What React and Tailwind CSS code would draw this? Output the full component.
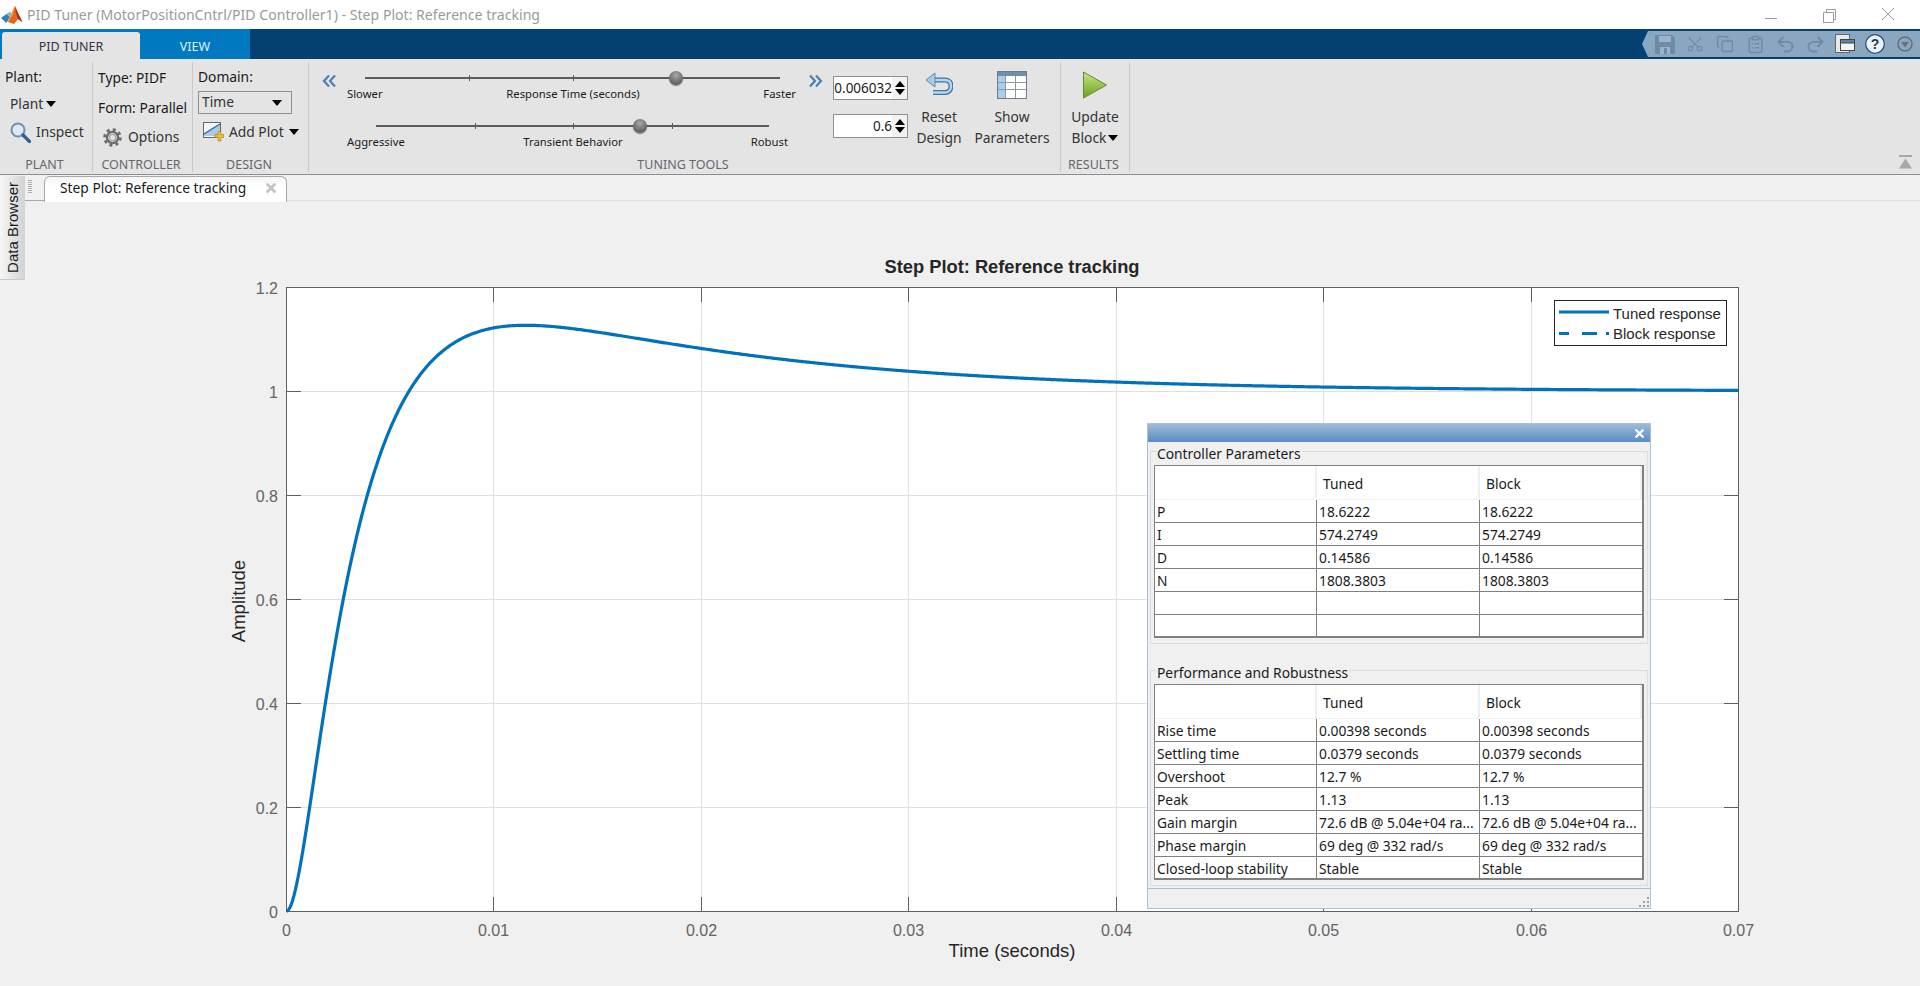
import React from "react";
import { Scissors, Copy, ClipboardList, Undo2, Redo2, X } from "lucide-react";

// fitted step response, y(t) from the reference plot
function stepResponse(t) {
  return 1 + 0.395 * Math.exp(-t / 0.0129) - 1.395 * (1 + 186 * t) * Math.exp(-420 * t) - 296 * t * Math.exp(-1000 * t);
}

function curvePath() {
  const pts = [];
  for (let x = 286.5; x <= 1739; x += 1.5) {
    const t = (x - 286.5) / 20740;
    pts.push(`${x.toFixed(1)} ${(911.3 - 520 * stepResponse(t)).toFixed(2)}`);
  }
  return "M" + pts.join("L");
}

const xTicks = [
  ["0", 286.5], ["0.01", 493.5], ["0.02", 701.5], ["0.03", 908.5], ["0.04", 1116.5], ["0.05", 1323.5], ["0.06", 1531.5], ["0.07", 1738.5],
];
const yTicks = [
  ["0", 911.5], ["0.2", 807.5], ["0.4", 703.5], ["0.6", 599.5], ["0.8", 495.5], ["1", 391.5], ["1.2", 287.5],
];

const controllerRows = [
  ["P", "18.6222", "18.6222"],
  ["I", "574.2749", "574.2749"],
  ["D", "0.14586", "0.14586"],
  ["N", "1808.3803", "1808.3803"],
  ["", "", ""],
  ["", "", ""],
];
const perfRows = [
  ["Rise time", "0.00398 seconds", "0.00398 seconds"],
  ["Settling time", "0.0379 seconds", "0.0379 seconds"],
  ["Overshoot", "12.7 %", "12.7 %"],
  ["Peak", "1.13", "1.13"],
  ["Gain margin", "72.6 dB @ 5.04e+04 ra...", "72.6 dB @ 5.04e+04 ra..."],
  ["Phase margin", "69 deg @ 332 rad/s", "69 deg @ 332 rad/s"],
  ["Closed-loop stability", "Stable", "Stable"],
];

function Caret({ className = "" }) {
  return <span className={"inline-block w-0 h-0 border-x-[5px] border-x-transparent border-t-[6px] border-t-black " + className}></span>;
}

function Group({ label, width, children }) {
  return (
    <div className={"flex flex-col h-[110px] border-r border-[#c9c9c9] shrink-0 " + width}>
      <div className="flex-1 min-h-0">{children}</div>
      <div className="h-[16px] leading-[18px] pr-[3px] text-center text-[12.5px] text-[#66666e]">{label}</div>
    </div>
  );
}

function Chevrons({ right }) {
  return (
    <svg width="14" height="14" viewBox="0 0 14 14" fill="none" stroke="#4a7fb0" strokeWidth="2.2">
      {right ? <path d="M1 1.5 6 7 1 12.5M7 1.5 12 7 7 12.5" /> : <path d="M13 1.5 8 7 13 12.5M7 1.5 2 7 7 12.5" />}
    </svg>
  );
}

function Slider({ trackClass, ticks, knob, labels, rightClass, topClass = "" }) {
  return (
    <div className={topClass}>
      <div className={"relative h-[14px] " + trackClass}>
        <div className="absolute left-0 right-0 top-[6px] h-[2px] bg-[#5c5c5c]"></div>
        {ticks.map((t, i) => (
          <div key={i} className="absolute top-[4px] w-px h-[6px] bg-[#5c5c5c]" style={{ left: t }}></div>
        ))}
        <div
          className="absolute top-0 w-[14px] h-[14px] rounded-full bg-[radial-gradient(circle_at_50%_30%,#a8a8a8,#5e5e5e_75%)] shadow-[0_1px_1px_rgba(0,0,0,0.45)]"
          style={{ left: knob }}
        ></div>
      </div>
      <div className="grid grid-cols-[1fr_auto_1fr] leading-[18px] text-[11.3px] text-[#1c1c1c]">
        <span>{labels[0]}</span>
        <span>{labels[1]}</span>
        <span className={"text-right " + rightClass}>{labels[2]}</span>
      </div>
    </div>
  );
}

function Spinner({ value, className = "" }) {
  return (
    <div className={"flex h-[24px] w-[75px] border border-[#8f8f8f] bg-white " + className}>
      <div className="flex-1 text-right text-[13.5px] leading-[22px] text-[#1a1a1a]">{value}</div>
      <div className="w-[15px] bg-[#f2f2f2] flex flex-col items-center justify-center gap-[2px]">
        <span className="w-0 h-0 border-x-[5px] border-x-transparent border-b-[6px] border-b-black"></span>
        <span className="w-0 h-0 border-x-[5px] border-x-transparent border-t-[6px] border-t-black"></span>
      </div>
    </div>
  );
}

function BigButton({ icon, top, bottom, width, caret }) {
  return (
    <div className={"flex flex-col items-center shrink-0 " + width}>
      <div className="h-[28px] mt-[9px] flex items-center justify-center">{icon}</div>
      <div className="mt-[7px] text-[13.8px] leading-[21px] text-[#333]">{top}</div>
      <div className="text-[13.8px] leading-[21px] text-[#333] flex items-center gap-[2px]">
        {bottom}
        {caret && <Caret />}
      </div>
    </div>
  );
}

function ParamTable({ rows }) {
  const headCell = "h-[34px] border-r-2 border-[#efefef] pl-[6px] leading-[36px]";
  const cell = "h-[23px] border-b border-[#808080] pl-[2px] leading-[23px] whitespace-nowrap overflow-hidden";
  return (
    <div className="ml-[3px] w-[490px] bg-white border border-[#808080] border-r-2 border-b-0 text-[13.8px] text-[#1a1a1a] [&>div:last-child>div]:border-b-2">
      <div className="grid grid-cols-[162px_163px_1fr] border-b border-[#efefef] h-[34px]">
        <div className={headCell}></div>
        <div className={headCell}>Tuned</div>
        <div className={headCell}>Block</div>
      </div>
      {rows.map((r, i) => (
        <div key={i} className="grid grid-cols-[162px_163px_1fr]">
          <div className={cell + " border-r"}>{r[0]}</div>
          <div className={cell + " border-r"}>{r[1]}</div>
          <div className={cell}>{r[2]}</div>
        </div>
      ))}
    </div>
  );
}

function ParamBox({ title, rows, className = "" }) {
  return (
    <div className={"border border-[#dcdcdc] pb-[5px] w-[498px] ml-[2px] " + className}>
      <div className="-mt-[7px] ml-[6px] h-[20px] w-fit bg-[#f0f0f0] pr-[1px] text-[13.8px] leading-[18px] text-[#1a1a1a]">{title}</div>
      <ParamTable rows={rows} />
    </div>
  );
}

function PlotChart() {
  return (
    <svg width="1920" height="784" viewBox="0 202 1920 784" className="block">
      <rect x="286.5" y="287.5" width="1452" height="624" fill="#fff" />
      {xTicks.slice(1, -1).map(([, x]) => (
        <line key={x} x1={x} x2={x} y1="287" y2="911" stroke="#dfdfdf" />
      ))}
      {yTicks.slice(1, -1).map(([, y]) => (
        <line key={y} x1="286" x2="1739" y1={y} y2={y} stroke="#dfdfdf" />
      ))}
      <rect x="286.5" y="287.5" width="1452" height="624" fill="none" stroke="#5f5f5f" />
      {xTicks.slice(1, -1).map(([, x]) => (
        <path key={x} d={`M${x} 911V897M${x} 288V302`} stroke="#5f5f5f" fill="none" />
      ))}
      {yTicks.slice(1, -1).map(([, y]) => (
        <path key={y} d={`M287 ${y}H301M1738 ${y}H1724`} stroke="#5f5f5f" fill="none" />
      ))}
      <path d={curvePath()} fill="none" stroke="#0072bd" strokeWidth="3.2" />

      <g fontFamily="'Liberation Sans', Arial, sans-serif">
        {xTicks.map(([t, x]) => (
          <text key={t} x={x} y="936" textAnchor="middle" fontSize="16" fill="#636363">{t}</text>
        ))}
        {yTicks.map(([t, y]) => (
          <text key={t} x="278" y={y + 6.5} textAnchor="end" fontSize="16" fill="#636363">{t}</text>
        ))}
        <text x="1012" y="273" textAnchor="middle" fontSize="18.3" fontWeight="700" fill="#262626">Step Plot: Reference tracking</text>
        <text x="1012" y="957" textAnchor="middle" fontSize="18.5" fill="#262626">Time (seconds)</text>
        <text transform="translate(245 601) rotate(-90)" textAnchor="middle" fontSize="18.5" fill="#262626">Amplitude</text>

        <rect x="1554.5" y="300.5" width="172" height="45" fill="#fff" stroke="#262626" />
        <line x1="1559" x2="1609" y1="312" y2="312" stroke="#0072bd" strokeWidth="3" />
        <path d="M1559 333.5H1569M1582 333.5H1597M1606 333.5H1609" stroke="#0072bd" strokeWidth="3" fill="none" />
        <text x="1613" y="319" fontSize="15" fill="#262626">Tuned response</text>
        <text x="1613" y="339" fontSize="15" fill="#262626">Block response</text>
      </g>
    </svg>
  );
}

export default function App() {
  return (
    <div className="relative flex flex-col h-screen w-full overflow-hidden bg-[#f0f0f0] font-['Noto_Sans',sans-serif] text-[13.8px]">
      {/* title bar */}
      <div className="h-[29px] bg-white flex items-center shrink-0 relative">
        <svg width="22" height="22" viewBox="0 0 22 22" className="ml-[1px] shrink-0">
          <path d="M0 14 5.5 10 9 13 5.5 19Z" fill="#2f7fb5" />
          <path d="M5.5 10 9 7.5 10.5 10 7.5 14.5 5.5 19 9 13Z" fill="#7ab4d6" />
          <path d="M9 13 14 2 17 9 21.5 18 17 15 13 20 7 18Z" fill="#e8641b" />
          <path d="M14 2 17 9 21.5 18 17 15 15 9Z" fill="#a8321a" />
          <path d="M9 13 14 2 12 11 7 18Z" fill="#f39a2e" />
        </svg>
        <div className="ml-[4px] text-[14.1px] text-[#9a9a9a] whitespace-nowrap">PID Tuner (MotorPositionCntrl/PID Controller1) - Step Plot: Reference tracking</div>
        <div className="ml-auto flex items-center">
          <svg width="180" height="20" viewBox="0 0 180 20" fill="none" stroke="#9c9c9c" strokeWidth="1">
            <path d="M25 13.5H37" />
            <path d="M83.5 7.5H93.5V17.5H83.5ZM86.5 7.5V4.5H95.5V14.5H93.5" />
            <path d="M142 3 154 15M154 3 142 15" />
          </svg>
        </div>
      </div>

      {/* tab strip */}
      <div className="h-[30px] bg-[#024172] flex shrink-0 relative">
        <div className="w-[250px] bg-[#0079c1] flex pl-[2px] pt-[3px]">
          <div className="w-[138px] bg-[#e4e4e4] rounded-t-[3px] text-center text-[12.5px] leading-[29px] text-[#33334a]">PID TUNER</div>
          <div className="flex-1 text-center text-[12.5px] leading-[29px] text-[#e4eef6]">VIEW</div>
        </div>
        <div className="ml-auto mt-[2px] mb-[2px] w-[278px] h-[26px] bg-[#8aa7c2] flex items-center [clip-path:polygon(6px_0,100%_0,100%_100%,6px_100%,0_50%)]">
          <svg width="20" height="20" viewBox="0 0 20 20" className="ml-[13px] shrink-0" fill="#6e8aa5">
            <path d="M0 1H17L20 4V20H0Z" />
            <path d="M4 2H16V8H4ZM5 13H15V20H5Z" fill="#9db3c9" />
            <path d="M9 14H12V20H9Z" fill="#6e8aa5" />
          </svg>
          <Scissors size={18} color="#6e8aa5" strokeWidth={1.6} className="ml-[11px] shrink-0 -rotate-90" />
          <Copy size={18} color="#6e8aa5" strokeWidth={1.8} className="ml-[12px] shrink-0" />
          <ClipboardList size={19} color="#6e8aa5" strokeWidth={1.8} className="ml-[12px] shrink-0" />
          <Undo2 size={21} color="#6e8aa5" strokeWidth={2.2} className="ml-[10px] shrink-0" />
          <Redo2 size={21} color="#6e8aa5" strokeWidth={2.2} className="ml-[9px] shrink-0" />
          <svg width="20" height="20" viewBox="0 0 20 20" className="ml-[9px] shrink-0">
            <rect x="0.5" y="0.5" width="14" height="18" fill="#e8e8e8" stroke="#666" />
            <rect x="5.5" y="5.5" width="14" height="11" fill="#f4f4f4" stroke="#444" />
            <rect x="5.5" y="5.5" width="14" height="3.5" fill="#4f87b8" stroke="#444" />
          </svg>
          <svg width="20" height="20" viewBox="0 0 20 20" className="ml-[10px] shrink-0">
            <circle cx="10" cy="10" r="9.3" fill="#eef2f6" stroke="#2b4f78" strokeWidth="1.3" />
            <text x="10" y="15" textAnchor="middle" fontSize="14" fontWeight="700" fontFamily="'Liberation Sans', sans-serif" fill="#1c3a5c">?</text>
          </svg>
          <svg width="16" height="16" viewBox="0 0 16 16" className="ml-[12px] shrink-0">
            <circle cx="8" cy="8" r="7" fill="none" stroke="#69707a" strokeWidth="1.6" />
            <path d="M4 6H12L8 11.5Z" fill="#69707a" />
          </svg>
        </div>
      </div>

      {/* ribbon */}
      <div className="h-[116px] bg-[#e4e4e4] border-b border-[#8e8e8e] flex pt-[3px] shrink-0">
        <Group label="PLANT" width="w-[93px]">
          <div className="pl-[5px] mt-[5px] leading-[20px] text-[#1a1a1a]">Plant:</div>
          <div className="pl-[10px] mt-[7px] leading-[20px] text-[#333] flex items-center gap-[3px]">Plant <Caret /></div>
          <div className="pl-[10px] mt-[8px] h-[20px] flex items-center gap-[5px] text-[#333]">
            <svg width="21" height="21" viewBox="0 0 21 21" className="shrink-0">
              <circle cx="8" cy="8" r="6.5" fill="#dbe9f4" stroke="#6b8fb0" strokeWidth="2" />
              <path d="M13 13 19.5 19.5" stroke="#2f5f93" strokeWidth="3.2" strokeLinecap="round" />
            </svg>
            Inspect
          </div>
        </Group>
        <Group label="CONTROLLER" width="w-[100px]">
          <div className="pl-[5px] mt-[6px] leading-[20px] text-[#1a1a1a]">Type: PIDF</div>
          <div className="pl-[5px] mt-[10px] leading-[20px] text-[#1a1a1a] whitespace-nowrap">Form: Parallel</div>
          <div className="pl-[10px] mt-[9px] h-[20px] flex items-center gap-[6px] text-[#333]">
            <svg width="19" height="19" viewBox="0 0 19 19" className="shrink-0" fill="none">
              <circle cx="9.5" cy="9.5" r="7.8" stroke="#6d6d6d" strokeWidth="3" strokeDasharray="3 3.13" />
              <circle cx="9.5" cy="9.5" r="5.6" stroke="#6d6d6d" strokeWidth="2.4" />
              <circle cx="9.5" cy="9.5" r="3.2" stroke="#a6a6a6" strokeWidth="1.2" />
            </svg>
            Options
          </div>
        </Group>
        <Group label="DESIGN" width="w-[116px]">
          <div className="pl-[5px] mt-[5px] leading-[20px] text-[#1a1a1a]">Domain:</div>
          <div className="ml-[5px] mt-[4px] w-[94px] h-[23px] border border-[#8f8f8f] flex items-center justify-between pl-[3px] pr-[9px] text-[#333]">
            Time <Caret />
          </div>
          <div className="pl-[10px] mt-[8px] h-[20px] flex items-center gap-[5px] text-[#333] whitespace-nowrap">
            <svg width="21" height="20" viewBox="0 0 21 20" className="shrink-0">
              <rect x="0.5" y="0.5" width="17" height="15" fill="#f6f6f6" stroke="#666" />
              <path d="M1 11 9 6 17 1.5V14H1Z" fill="#a9cbe6" />
              <path d="M1 12 9 7 17 2" stroke="#2f6fa8" strokeWidth="1.4" fill="none" />
              <path d="M12 12.5H15V9.5H18V12.5H21V15.5H18V19H15V15.5H12Z" fill="#e8b93a" stroke="#a67f1c" strokeWidth="0.6" />
            </svg>
            Add Plot <Caret />
          </div>
        </Group>
        <Group label="TUNING TOOLS" width="w-[752px]">
          <div className="flex h-full">
            <div className="ml-[13px] mt-[12px] h-[14px]"><Chevrons /></div>
            <div className="ml-[11px] w-[452px] mt-[9px] shrink-0">
              <Slider
                trackClass="ml-[17.5px] w-[415px]"
                ticks={["104px", "208px", "311px"]}
                knob="304px"
                labels={["Slower", "Response Time (seconds)", "Faster"]}
                rightClass="mr-[3px]"
              />
              <Slider
                topClass="mt-[16px]"
                trackClass="ml-[28.5px] w-[393px]"
                ticks={["99px", "197px", "296px"]}
                knob="257px"
                labels={["Aggressive", "Transient Behavior", "Robust"]}
                rightClass="mr-[11px]"
              />
            </div>
            <div className="ml-[10px] mt-[12px] h-[14px] w-[14px]"><Chevrons right /></div>
            <div className="ml-[10px] mt-[14px]">
              <Spinner value="0.006032" />
              <Spinner value="0.6" className="mt-[14px]" />
            </div>
            <BigButton
              width="w-[62px]"
              top="Reset"
              bottom="Design"
              icon={
                <svg width="28" height="26" viewBox="0 0 28 26" fill="none">
                  <path d="M9 8H20C24 8 26 10.5 26 14C26 18 23.5 20.5 20 20.5H8" stroke="#3f76a8" strokeWidth="5" />
                  <path d="M9 8H20C24 8 26 10.5 26 14C26 18 23.5 20.5 20 20.5H8" stroke="#b8d6ec" strokeWidth="2.4" />
                  <path d="M1 8 10 1V15Z" fill="#a9cbe3" stroke="#5c8cb6" />
                </svg>
              }
            />
            <BigButton
              width="w-[84px]"
              top="Show"
              bottom="Parameters"
              icon={
                <svg width="30" height="28" viewBox="0 0 30 28" shapeRendering="crispEdges">
                  <rect x="0.5" y="0.5" width="29" height="27" fill="#fff" stroke="#6f7c8a" />
                  <rect x="1" y="1" width="28" height="4" fill="#6f8fb0" />
                  <rect x="1" y="5" width="7" height="22" fill="#a8cdea" />
                  <path d="M1 11.5H29M1 18.5H29M8.5 5V27M18.5 5V27" stroke="#8d98a3" fill="none" />
                </svg>
              }
            />
          </div>
        </Group>
        <Group label="RESULTS" width="w-[69px]">
          <BigButton
            width="w-full"
            top="Update"
            bottom="Block"
            caret
            icon={
              <svg width="26" height="28" viewBox="0 0 26 28">
                <defs>
                  <linearGradient id="playGreen" x1="0" y1="0" x2="0" y2="1">
                    <stop offset="0" stopColor="#c9e58a" />
                    <stop offset="1" stopColor="#6aa21f" />
                  </linearGradient>
                </defs>
                <path d="M1.5 1 24.5 14 1.5 27Z" fill="url(#playGreen)" stroke="#5f8f2a" />
              </svg>
            }
          />
        </Group>
        <div className="flex-1 flex justify-end items-end pr-[8px] pb-[5px]">
          <svg width="13" height="14" viewBox="0 0 13 14" fill="#a8a8a8">
            <rect x="0" y="0" width="13" height="2" />
            <path d="M6.5 3.5 13 13.5H0Z" />
          </svg>
        </div>
      </div>

      {/* document tabs */}
      <div className="h-[27px] flex shrink-0">
        <div className="w-[44px] mb-px border-b border-[#a8a8a8] flex pl-[28px] pt-[5px]">
          <div className="w-[4px] h-[13px] bg-[repeating-linear-gradient(0deg,#b0b0b0_0,#b0b0b0_1px,transparent_1px,transparent_2px)]"></div>
        </div>
        <div className="w-[243px] border border-b-0 border-[#a8a8a8] rounded-t-[6px] mt-px pb-[3px] bg-gradient-to-b from-[#f4f4f4] to-white to-40% flex items-center pl-[15px] pr-[8px] justify-between text-[#1a1a1a]">
          <span className="whitespace-nowrap">Step Plot: Reference tracking</span>
          <X size={14} strokeWidth={5} color="#c4c4c4" />
        </div>
        <div className="flex-1 mb-px border-b border-[#e0e0e0]"></div>
      </div>

      {/* plot */}
      <div className="relative flex-1 min-h-0">
        <PlotChart />
        <div className="absolute left-[1147px] top-[221px] w-[504px] h-[486px] border border-[#a9c0d9] bg-[#f0f0f0] flex flex-col">
          <div className="h-[18px] shrink-0 bg-gradient-to-b from-[#9fbad8] to-[#5a8dc3] flex items-center justify-end pr-[4px]">
            <X size={13} strokeWidth={4.5} color="#fff" />
          </div>
          <ParamBox title="Controller Parameters" rows={controllerRows} className="mt-[9px]" />
          <ParamBox title="Performance and Robustness" rows={perfRows} className="mt-[26px]" />
          <div className="mt-[2px] flex-1 border-t border-[#a9c0d9] flex justify-end items-end pr-[1px] pb-[1px]">
            <svg width="10" height="10" viewBox="0 0 10 10" fill="#a0a0a0">
              <path d="M8 0h2v2H8zM4 4h2v2H4zM8 4h2v2H8zM0 8h2v2H0zM4 8h2v2H4zM8 8h2v2H8z" />
            </svg>
          </div>
        </div>
      </div>

      {/* collapsed side tab */}
      <div className="absolute left-0 top-[176px] w-[25px] h-[104px] bg-gradient-to-r from-[#f6f6f6] to-[#d2d2d2] border-b border-[#c8c8c8] flex items-center justify-center pl-px">
        <span className="[writing-mode:vertical-rl] rotate-180 text-[15px] text-[#1a1a1a] font-['Liberation_Sans',sans-serif] whitespace-nowrap">Data Browser</span>
      </div>
    </div>
  );
}
